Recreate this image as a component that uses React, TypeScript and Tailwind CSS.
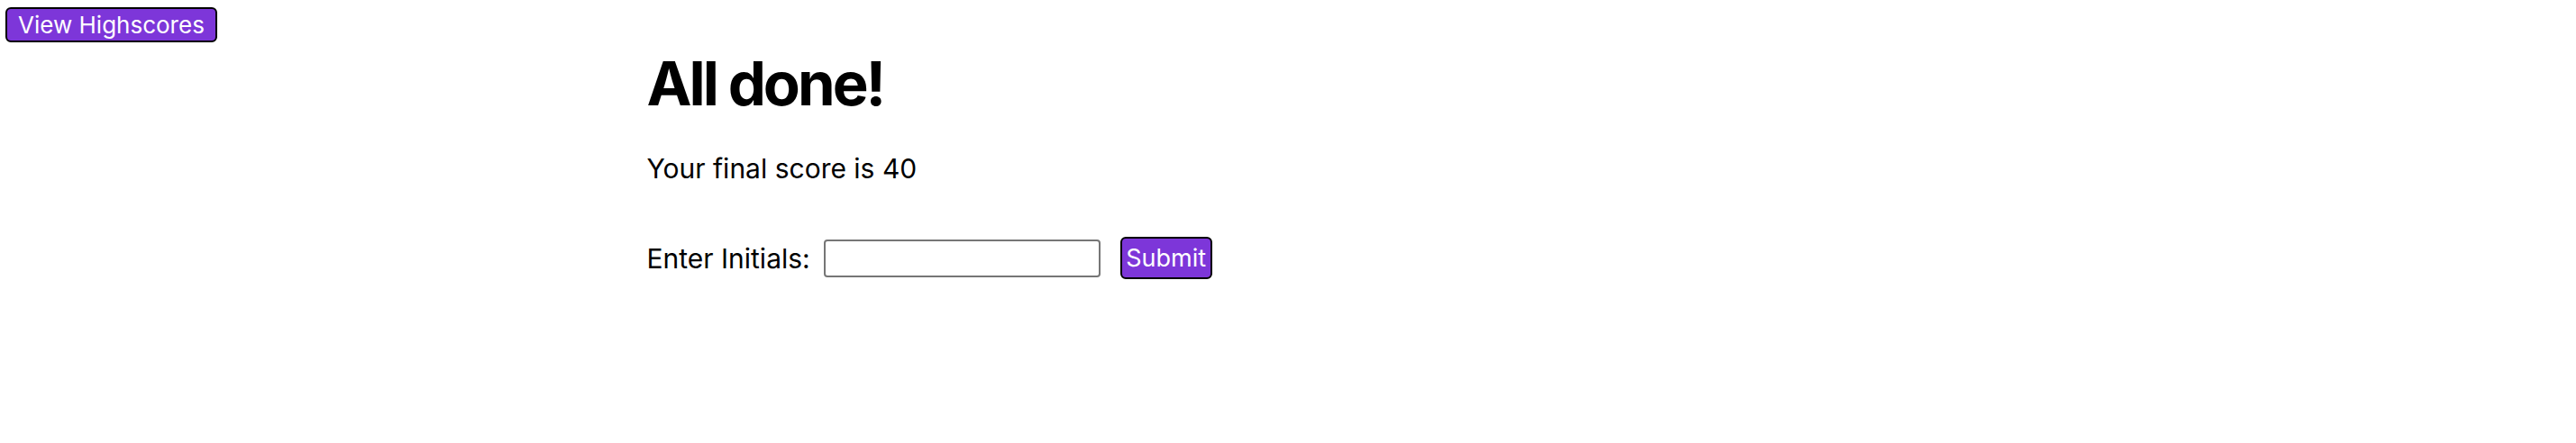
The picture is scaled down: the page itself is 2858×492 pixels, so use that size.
export default function App() {
  return (
    <main className="min-h-screen bg-white text-black font-['Inter','Liberation_Sans',sans-serif]">
      <div className="pt-2 pl-1.5">
        <button className="h-[39px] px-[12px] bg-[#7d36d9] text-white text-[26px] leading-none border-2 border-black rounded-md">
          View Highscores
        </button>
      </div>

      <div className="w-1/2 mx-auto pl-[3px]">
        <h1 className="mt-[12px] text-[67px] leading-none font-bold tracking-[-0.045em]">All done!</h1>
        <p className="mt-[46px] text-[30px] leading-none">Your final score is 40</p>

        <form className="mt-[61px] flex items-center" onSubmit={(e) => e.preventDefault()}>
          <label htmlFor="initials" className="text-[30px] leading-none">
            Enter Initials:
          </label>
          <input
            id="initials"
            type="text"
            className="ml-[15px] w-[307px] h-[42px] border-2 border-[#767676] rounded"
          />
          <button
            type="submit"
            className="ml-[22px] w-[102px] h-[47px] bg-[#7d36d9] text-white text-[27px] leading-none border-2 border-black rounded-md"
          >
            Submit
          </button>
        </form>
      </div>
    </main>
  );
}
